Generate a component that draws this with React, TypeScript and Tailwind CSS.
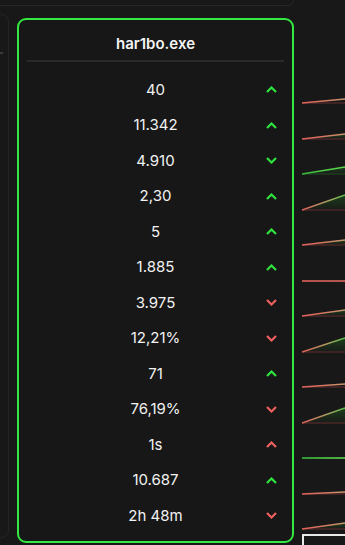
import React from "react";

type Trend = "up" | "down";
type Tone = "good" | "bad";

interface Row {
  value: string;
  trend: Trend;
  tone: Tone;
  rise: number;
  line: "red" | "mixed" | "green";
}

const rows: Row[] = [
  { value: "40", trend: "up", tone: "good", rise: 4, line: "red" },
  { value: "11.342", trend: "up", tone: "good", rise: 5, line: "red" },
  { value: "4.910", trend: "down", tone: "good", rise: 7, line: "green" },
  { value: "2,30", trend: "up", tone: "good", rise: 15, line: "mixed" },
  { value: "5", trend: "up", tone: "good", rise: 5, line: "red" },
  { value: "1.885", trend: "up", tone: "good", rise: 0, line: "red" },
  { value: "3.975", trend: "down", tone: "bad", rise: 6, line: "red" },
  { value: "12,21%", trend: "down", tone: "bad", rise: 14, line: "mixed" },
  { value: "71", trend: "up", tone: "good", rise: 3, line: "red" },
  { value: "76,19%", trend: "down", tone: "bad", rise: 15, line: "mixed" },
  { value: "1s", trend: "up", tone: "bad", rise: 0, line: "green" },
  { value: "10.687", trend: "up", tone: "good", rise: 2, line: "red" },
  { value: "2h 48m", trend: "down", tone: "bad", rise: 6, line: "red" },
];

const Chevron: React.FC<{ trend: Trend; tone: Tone }> = ({ trend, tone }) => (
  <svg
    width="11"
    height="7"
    viewBox="0 0 11 7"
    className={tone === "good" ? "text-[#2fe23d]" : "text-[#ef5f5f]"}
  >
    <polyline
      points={trend === "up" ? "1,6 5.5,1.5 10,6" : "1,1 5.5,5.5 10,1"}
      fill="none"
      stroke="currentColor"
      strokeWidth="2.2"
    />
  </svg>
);

const Spark: React.FC<{ row: Row; idx: number }> = ({ row, idx }) => {
  const base = 31;
  const end = base - row.rise;
  const stops =
    row.line === "green"
      ? ["#39b93a", "#4fcf48", "#5cd64f"]
      : row.line === "mixed"
      ? ["#e0605a", "#b39a62", "#5cc24a"]
      : row.rise === 0
      ? ["#e0605a", "#dc645c", "#d86a5e"]
      : ["#e0605a", "#d27a62", "#c4986c"];
  const baseColor = row.line === "green" ? "#1f3d21" : "#4a2727";
  return (
    <svg width="43" height="35.5" viewBox="0 0 43 35.5" className="block">
      <defs>
        <linearGradient
          id={`ln${idx}`}
          gradientUnits="userSpaceOnUse"
          x1="0"
          y1="0"
          x2="43"
          y2="0"
        >
          <stop offset="0" stopColor={stops[0]} />
          <stop offset="0.55" stopColor={stops[1]} />
          <stop offset="1" stopColor={stops[2]} />
        </linearGradient>
        <linearGradient id={`fl${idx}`} x1="0" y1="0" x2="0" y2="1">
          <stop offset="0" stopColor="#1f4d1f" stopOpacity="0.8" />
          <stop offset="1" stopColor="#1a2a1a" stopOpacity="0.3" />
        </linearGradient>
      </defs>
      {row.rise > 4 && (
        <polygon points={`0,${base} 43,${end} 43,${base}`} fill={`url(#fl${idx})`} />
      )}
      <line x1="0" y1={base} x2="43" y2={base} stroke={baseColor} strokeWidth="1.5" />
      <line x1="0" y1={base} x2="43" y2={end} stroke={`url(#ln${idx})`} strokeWidth="1.5" />
    </svg>
  );
};

export default function App() {
  return (
    <div
      className="w-[345px] h-[545px] overflow-hidden bg-[#181818] flex flex-col"
      style={{ fontFamily: "Inter, 'Noto Sans', sans-serif" }}
    >
      {/* top panel edge */}
      <div className="h-[6px] w-[294px] shrink-0 border-b border-r border-[#262626] rounded-br-[8px]" />

      <div className="flex items-start">
        {/* left panel edge */}
        <div className="mt-[8px] w-[9px] h-[524px] shrink-0 border border-l-0 border-[#242424] rounded-r-[8px]">
          <div className="mt-[37px] w-[3px] h-[2px] bg-[#3a3a3a]" />
        </div>

        {/* main card */}
        <div className="ml-[8px] mt-[12px] w-[277px] h-[525px] shrink-0 border-2 border-[#33e840] rounded-[9px] bg-[#171717] flex flex-col">
          <div className="pt-[14px] pb-[6px] text-center text-[15px] leading-[20px] font-semibold text-[#f4f4f4]">
            har1bo.exe
          </div>
          <div className="mx-[8px] h-[2px] bg-[#2a2a2a]" />
          <div className="mt-[10px] flex flex-col">
            {rows.map((r) => (
              <div
                key={r.value}
                className="h-[35.5px] grid grid-cols-[1fr_auto_1fr] items-center"
              >
                <div />
                <div className="text-[15px] leading-[20px] text-[#f2f2f2]">{r.value}</div>
                <div className="flex justify-end pr-[15px]">
                  <Chevron trend={r.trend} tone={r.tone} />
                </div>
              </div>
            ))}
          </div>
        </div>

        {/* sparkline column */}
        <div className="ml-[8px] mt-[66px] w-[43px] shrink-0 flex flex-col">
          {rows.map((r, i) => (
            <Spark key={r.value} row={r} idx={i} />
          ))}
          <div className="h-[20px] border-t-2 border-l-2 border-[#e8e8e8]" />
        </div>
      </div>
    </div>
  );
}
